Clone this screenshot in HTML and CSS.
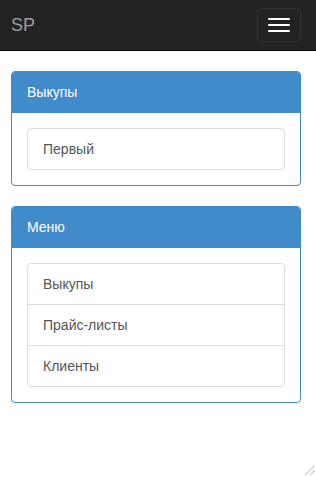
FILE: index.html
```html
<!DOCTYPE html>
<html lang="ru">
<head>
<meta charset="utf-8">
<title>SP</title>
<link rel="stylesheet" href="styles.css">
</head>
<body>
<nav class="navbar">
  <a class="brand" href="#">SP</a>
  <button class="toggle" type="button" aria-label="Menu">
    <span class="bar"></span>
    <span class="bar"></span>
    <span class="bar"></span>
  </button>
</nav>
<main class="container">
  <section class="panel">
    <div class="panel-heading">Выкупы</div>
    <div class="panel-body">
      <div class="list-group">
        <a class="list-item" href="#">Первый</a>
      </div>
    </div>
  </section>
  <section class="panel">
    <div class="panel-heading">Меню</div>
    <div class="panel-body">
      <div class="list-group">
        <a class="list-item" href="#">Выкупы</a>
        <a class="list-item" href="#">Прайс-листы</a>
        <a class="list-item" href="#">Клиенты</a>
      </div>
    </div>
  </section>
</main>
<svg class="grip" width="12" height="12" viewBox="0 0 12 12">
  <path d="M11 2 L2 11 M11 7 L7 11" stroke="#aaa" stroke-width="1.2" stroke-dasharray="1.2 0.8" fill="none"/>
</svg>
</body>
</html>
```
FILE: styles.css
```css
* { box-sizing: border-box; }
html, body {
  margin: 0;
  height: 100%;
}
body {
  font-family: "Liberation Sans", Arial, sans-serif;
  font-size: 14px;
  line-height: 20px;
  color: #333;
  background: #fff;
  position: relative;
}
.navbar {
  height: 51px;
  background: #222;
  border-bottom: 1px solid #080808;
  display: flex;
  align-items: flex-start;
  justify-content: space-between;
  padding: 0 15px 0 11px;
}
.brand {
  color: #9d9d9d;
  font-size: 18px;
  line-height: 20px;
  padding: 15px 0;
  text-decoration: none;
}
.toggle {
  margin-top: 8px;
  width: 44px;
  height: 34px;
  padding: 9px 10px;
  background: transparent;
  border: 1px solid #333;
  border-radius: 4px;
  display: flex;
  flex-direction: column;
  gap: 4px;
}
.bar {
  display: block;
  width: 22px;
  height: 2px;
  border-radius: 1px;
  background: #fff;
}
.container {
  padding: 20px 15px 0 11px;
}
.panel {
  border: 1px solid #428bca;
  border-radius: 4px;
  margin-bottom: 20px;
  background: #fff;
}
.panel-heading {
  background: #428bca;
  color: #fff;
  font-size: 14px;
  line-height: 20px;
  padding: 10px 15px;
  border-bottom: 1px solid #428bca;
  border-radius: 3px 3px 0 0;
}
.panel-body {
  padding: 15px;
}
.list-group {
  display: flex;
  flex-direction: column;
}
.list-item {
  display: block;
  padding: 10px 15px;
  border: 1px solid #ddd;
  margin-bottom: -1px;
  color: #555;
  text-decoration: none;
  background: #fff;
}
.list-item:first-child { border-radius: 4px 4px 0 0; }
.list-item:last-child { border-radius: 0 0 4px 4px; margin-bottom: 0; }
.list-item:only-child { border-radius: 4px; }
.grip {
  position: absolute;
  right: 1px;
  bottom: 1px;
}
```
